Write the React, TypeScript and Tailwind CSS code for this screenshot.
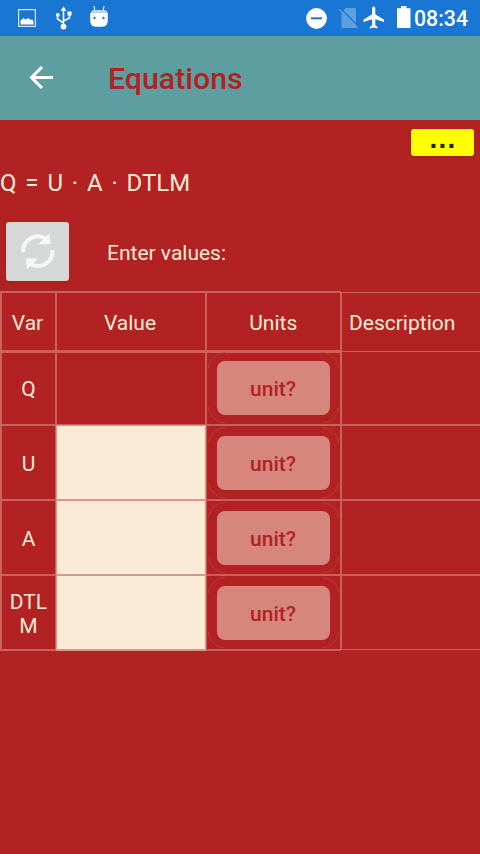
const line = "border-[#c9625a]";

function UnitButton({ first }: { first?: boolean }) {
  return (
    <div className={`relative grid h-[72px] w-[131px] shrink-0 place-items-center ${first ? "-mt-[2px]" : ""}`}>
      <svg className="absolute inset-0" width="131" height="72" fill="none" stroke="#bd3b37" strokeWidth="0.8">
        <path d="M.5 16A17 17 0 0 1 17 .5M114 .5A17 17 0 0 1 130.500 16M130.500 55A17 17 0 0 1 114 71M17 71A17 17 0 0 1 .5 55" />
      </svg>
      <button className="h-[54px] w-[113px] rounded-[8px] bg-[#d6867d] pt-[3px] pr-px text-[21px] leading-none font-medium text-[#b22222]">
        unit?
      </button>
    </div>
  );
}

function StatusBar() {
  return (
    <div className="flex h-9 items-center bg-[#1976d2] text-white">
      <svg width="300" height="36" fill="none">
        <rect x="18.600" y="9.600" width="16.800" height="16.800" stroke="#d9e8f8" strokeWidth="1.200" />
        <path d="M20.500 24.500v-4l3-2.500 2 1.500 3-1.500 2 2 1.500-.8 1.500 2v3.300z" fill="#fff" />
        <path d="M63.500 26V9M57.500 15.500v3.300l6 4.200M69.500 14v4l-6 3" stroke="#fff" strokeWidth="1.600" />
        <circle cx="63.500" cy="26.600" r="2.900" fill="#fff" />
        <circle cx="57.800" cy="14.800" r="1.900" fill="#fff" />
        <path d="m63.500 6.500 3 4.200h-6zM67.500 11.500h4v4h-4z" fill="#fff" />
        <path d="M94 6l.8 5M104 6l-.8 5" stroke="#fff" strokeWidth="1" />
        <path d="M91 13Q91.500 10 94 10h10q3 0 3.500 3z" fill="#b9d4f1" />
        <path d="M90.200 13h17.600v7q0 6.700-5.500 6.700h-6.600Q90.200 26.700 90.200 20z" fill="#fff" />
        <circle cx="94.500" cy="18" r="1.200" fill="#1976d2" />
        <circle cx="103.500" cy="18" r="1.200" fill="#1976d2" />
      </svg>
      <svg width="114" height="36" fill="none">
        <circle cx="16.500" cy="18.500" r="10.400" fill="#fff" />
        <path d="M11 18.300h11" stroke="#1976d2" strokeWidth="2" />
        <path d="M46 8h8.500q1.500 0 1.500 1.500V28H43q-1.500 0-1.500-1.500V12.500z" fill="#5e9fe0" />
        <path d="m40.300 8.200 18.600 18.600" stroke="#1976d2" strokeWidth="1.300" />
        <path d="m39 9.300 18.700 18.700" stroke="#5e9fe0" strokeWidth="1.500" />
        <path d="M84 22v-2.200l-8.700-5.500V8a1.600 1.600 0 0 0-3.200 0v6.300l-8.700 5.500V22l8.700-2.700v5.900l-2.300 1.700v1.700l3.900-1.200 3.900 1.200v-1.700l-2.300-1.700v-5.900z" fill="#fff" />
        <path d="M97 8.200h4V6h5.500v2.200h4V28H97z" fill="#fff" />
      </svg>
      <span className="mt-[2px] text-[21.3px] leading-none font-medium">08:34</span>
    </div>
  );
}

function Row({ name, input, first, last }: { name: string; input?: boolean; first?: boolean; last?: boolean }) {
  const height = first ? "h-[73px]" : last ? "h-[76px]" : "h-[75px]";
  const bottom = last ? "border-b-2" : "border-b";
  return (
    <div className={`grid grid-cols-[56px_150px_135px_139px] ${height}`}>
      <div className={`flex items-center justify-center border-t border-r border-l-2 ${bottom} ${line} ${input ? "pt-[2px]" : ""}`}>
        <span className="w-[46px] text-center leading-6 break-all">{name}</span>
      </div>
      <div className={`border-x border-t ${bottom} ${input ? "border-[#df958a] bg-[#faebd7]" : line}`} />
      <div className={`flex items-center justify-center border-x border-t ${bottom} ${line}`}>
        <UnitButton first={first} />
      </div>
      <div className={`border-l ${first ? "" : "border-t"} ${last ? "mb-px" : ""} border-b ${line}`} />
    </div>
  );
}

export default function App() {
  return (
    <div className="h-[854px] w-[480px] overflow-hidden bg-[#b22222] font-['Roboto',sans-serif] text-[21px] text-[#faebd7]">
      <StatusBar />
      <header className="flex h-[84px] items-center bg-[#5f9ea0]">
        <svg className="ml-[29px]" width="24" height="26" fill="none" stroke="#fff" strokeWidth="3">
          <path d="M24 12.500H2.500M13 2 2.500 12.500 13 23" />
        </svg>
        <h1 className="mt-[2px] ml-[55px] text-[30.3px] leading-none font-medium text-[#b22222]">Equations</h1>
      </header>
      <div className="flex h-[46px] justify-end pt-[9px] pr-[6px]">
        <button className="h-[27px] w-[63px] rounded-[3px] bg-[#ffff00] pb-[7px] pl-px font-['Liberation_Sans',sans-serif] text-[28px] leading-[16px] font-bold tracking-[1.2px] text-[#222200] shadow-sm">
          ...
        </button>
      </div>
      <p className="h-[56px] text-[24px] leading-[34px] [word-spacing:2.9px] whitespace-pre">Q = U · A · DTLM</p>
      <div className="flex h-[69px] items-start pl-[6px]">
        <button className="grid h-[59px] w-[63px] place-items-center rounded-[3px] bg-[#d6d7d7] shadow-sm">
          <svg width="36" height="38" fill="none">
            <path d="M3.100 19.200A14.700 14.700 0 0 1 26 6M32.500 17.200A14.700 14.700 0 0 1 9.600 30.400" stroke="#f7f7f7" strokeWidth="4" />
            <path d="M29.500.2 30.500 11.200H18zM6 25.500H18L6.800 36.500z" fill="#f7f7f7" />
          </svg>
        </button>
        <span className="ml-[38px] leading-[62px]">Enter values:</span>
      </div>
      <div>
        <div className="grid h-[61px] grid-cols-[56px_150px_135px_139px] grid-rows-[61px] text-center leading-[60px]">
          <div className={`border-y-2 border-r border-l-2 pr-[2px] ${line}`}>Var</div>
          <div className={`border-x border-y-2 pr-[2px] ${line}`}>Value</div>
          <div className={`border-x border-y-2 pr-[0.5px] ${line}`}>Units</div>
          <div className={`mt-px border-y border-l pl-[7px] text-left ${line}`}>Description</div>
        </div>
        <Row name="Q" first />
        <Row name="U" input />
        <Row name="A" input />
        <Row name="DTLM" input last />
      </div>
    </div>
  );
}
